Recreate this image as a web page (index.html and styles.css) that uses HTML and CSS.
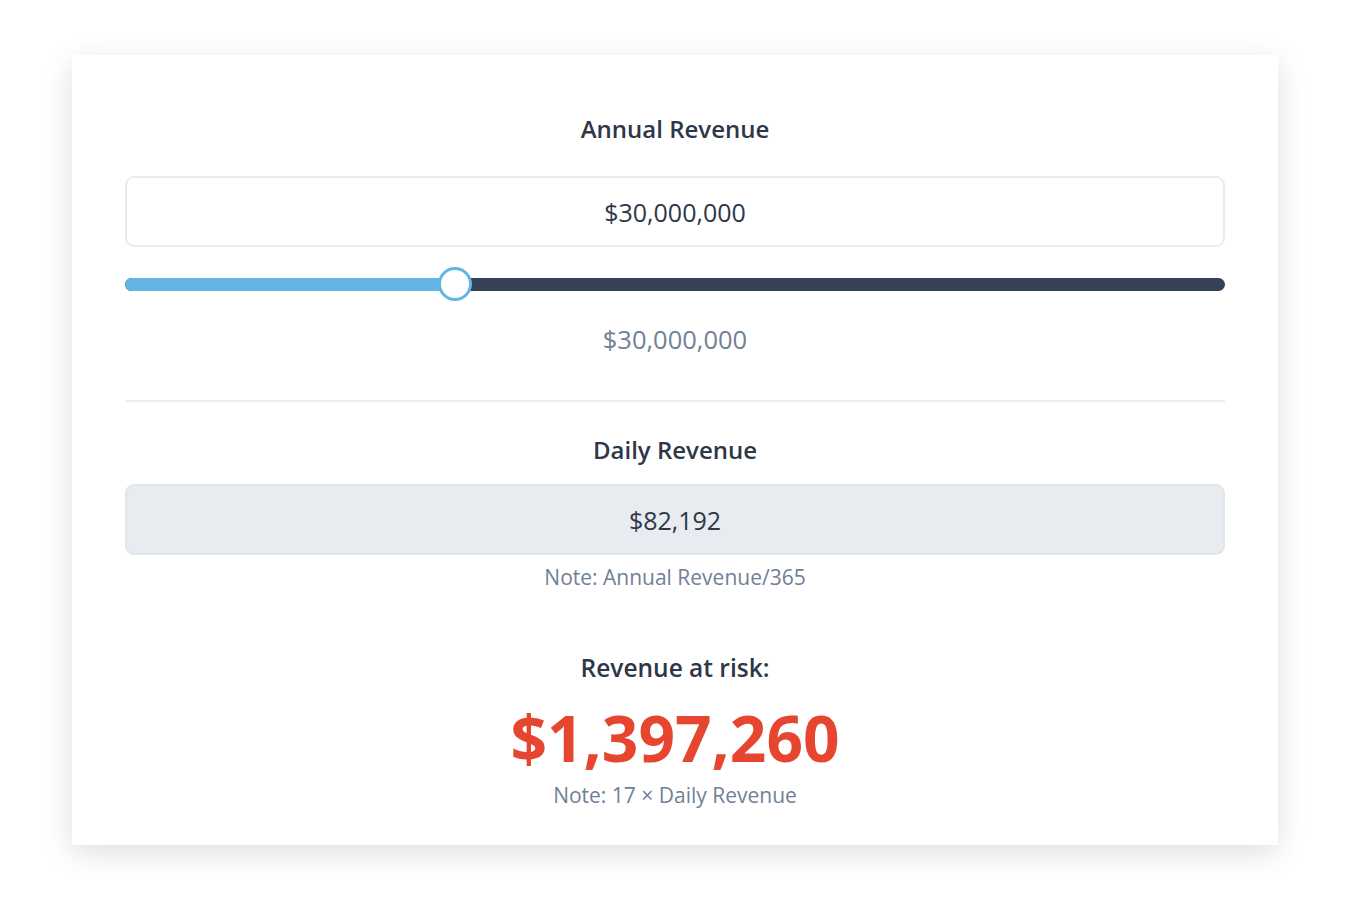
FILE: index.html
```html
<!DOCTYPE html>
<html lang="en">
<head>
    <meta charset="UTF-8" />
    <meta name="viewport" content="width=device-width, initial-scale=1" />
    <title>Revenue at Risk Calculator</title>
    <link rel="stylesheet" href="styles.css">
</head>

<body>
    <main class="calculator" role="main">

        <section class="field">
            <h2 class="field-label">Annual Revenue</h2>
            <div class="value-box">$30,000,000</div>
            <div class="slider" aria-label="Annual revenue slider">
                <div class="slider-fill" style="width: 30%;"></div>
                <div class="slider-thumb" style="left: 30%;"></div>
            </div>
            <p class="slider-value">$30,000,000</p>
        </section>

        <hr class="divider" />

        <section class="field">
            <h2 class="field-label">Daily Revenue</h2>
            <div class="value-box value-box--readonly">$82,192</div>
            <p class="note">Note: Annual Revenue/365</p>
        </section>

        <section class="result">
            <h2 class="field-label">Revenue at risk:</h2>
            <p class="result-amount">$1,397,260</p>
            <p class="note">Note: 17 × Daily Revenue</p>
        </section>

    </main>
</body>

</html>
```

FILE: styles.css
```css
* {
    box-sizing: border-box;
}

html,
body {
    margin: 0;
    background: #ffffff;
    font-family: 'Open Sans', 'Noto Sans', sans-serif;
    color: #2d3748;
    -webkit-font-smoothing: antialiased;
}

body {
    padding: 55px 72px;
}

.calculator {
    background: #fff;
    height: 790px;
    padding: 57px 53px 0;
    box-shadow: 0 8px 28px rgba(0, 0, 0, 0.13);
}

.field {
    display: flex;
    flex-direction: column;
    align-items: stretch;
    text-align: center;
}

.field-label {
    margin: 0;
    font-size: 24px;
    line-height: 33px;
    font-weight: 600;
    color: #2d3748;
}

.value-box {
    margin-top: 31px;
    height: 71px;
    display: flex;
    align-items: center;
    justify-content: center;
    border: 2px solid #e8ebf1;
    border-radius: 9px;
    font-size: 25px;
    color: #2d3748;
}

.value-box--readonly {
    margin-top: 18px;
    background: #e8ebef;
    border-color: #e2e6eb;
}

.slider {
    position: relative;
    margin-top: 20px;
    height: 34px;
    display: flex;
    align-items: center;
}

.slider::before {
    content: "";
    position: absolute;
    left: 0;
    right: 0;
    height: 13px;
    border-radius: 7px;
    background: #344157;
}

.slider-fill {
    position: relative;
    height: 13px;
    border-radius: 7px 0 0 7px;
    background: #63b5e5;
}

.slider-thumb {
    position: absolute;
    top: 0;
    width: 34px;
    height: 34px;
    margin-left: -17px;
    border-radius: 50%;
    background: #fff;
    border: 3px solid #63b5e5;
}

.slider-value {
    margin: 20px 0 0;
    font-size: 25.5px;
    line-height: 36px;
    color: #718096;
}

.divider {
    margin: 43px 0 31px;
    border: none;
    height: 2px;
    background: #eceef2;
}

.note {
    margin: 7px 0 0;
    font-size: 21px;
    line-height: 30px;
    color: #718096;
}

.result {
    margin-top: 58px;
    text-align: center;
}

.result .field-label {
    font-size: 24.5px;
    line-height: 36px;
}

.result-amount {
    margin: 14px 0 0;
    font-size: 64px;
    line-height: 76px;
    font-weight: 700;
    color: #e6452f;
}

.result .note {
    margin-top: 4px;
}
```
